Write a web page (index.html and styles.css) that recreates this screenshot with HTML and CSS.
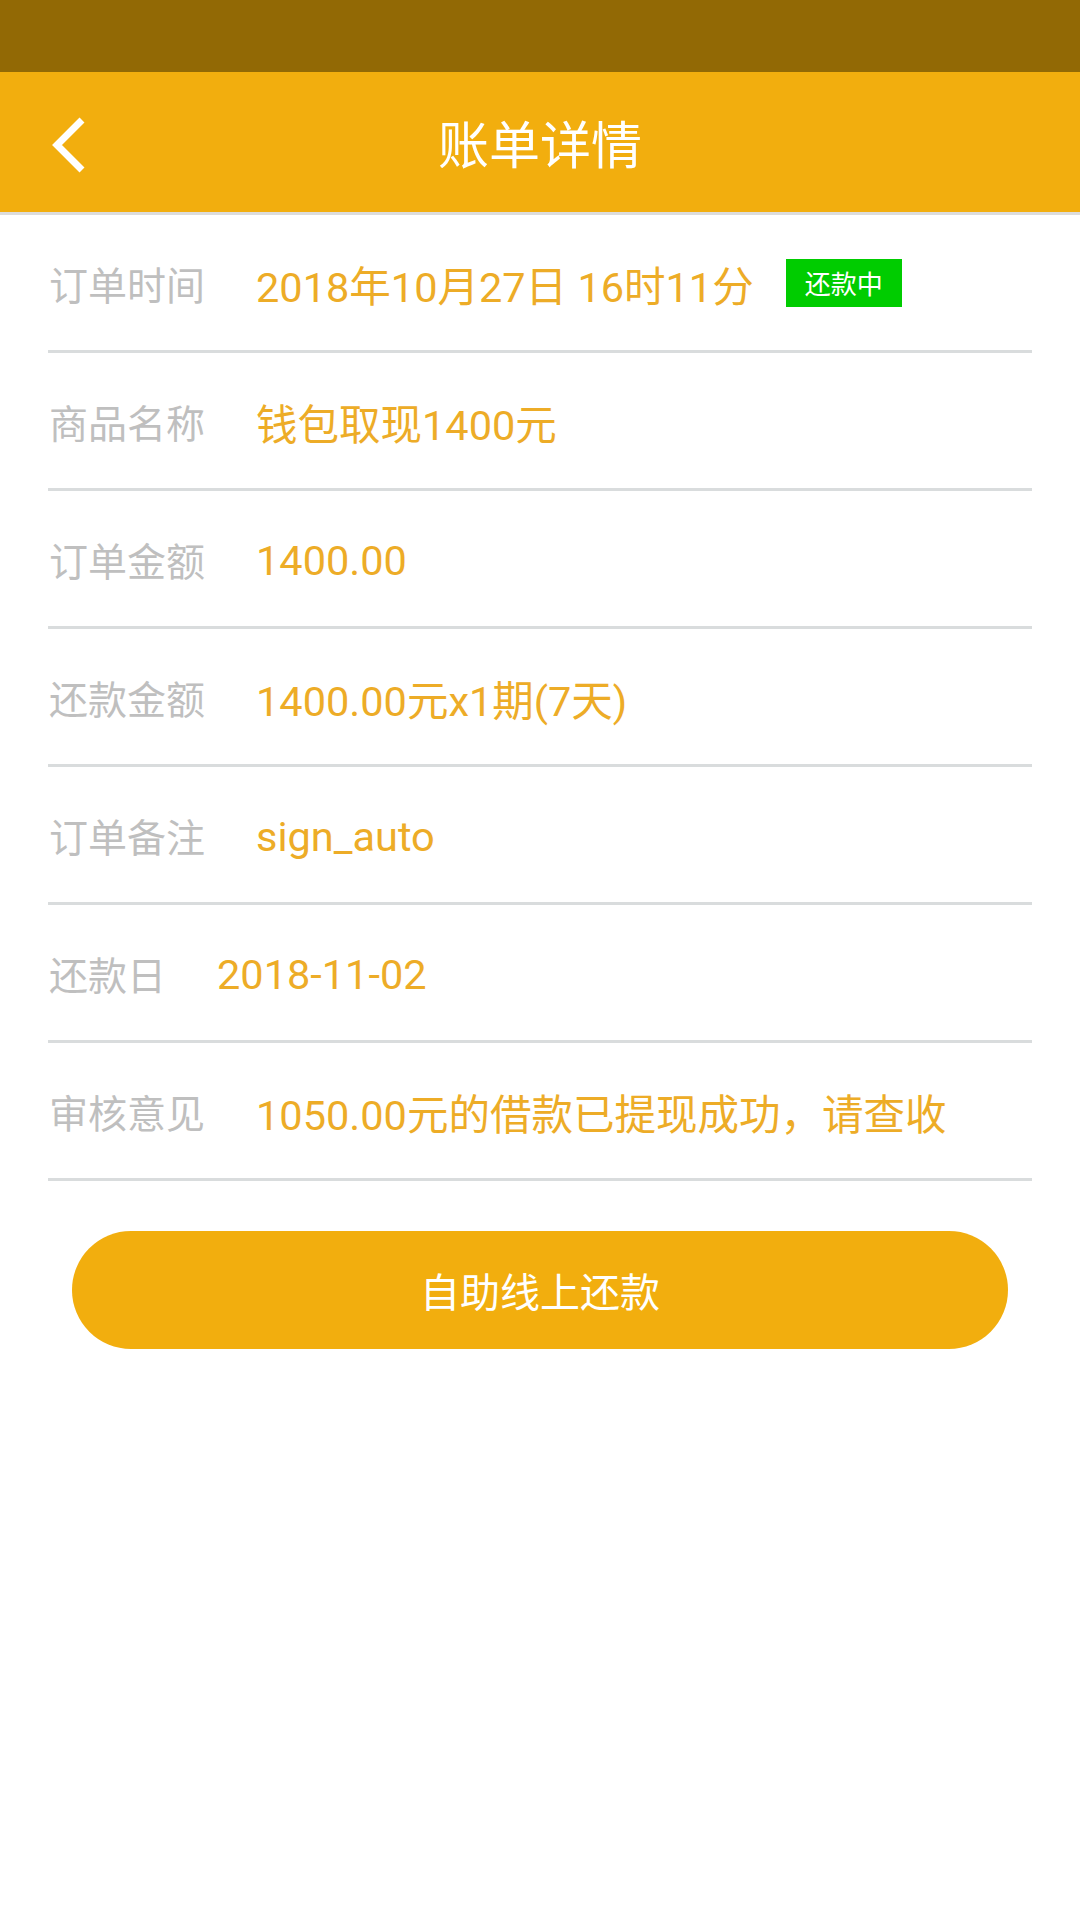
FILE: index.html
```html
<!DOCTYPE html>
<html lang="zh-CN">
<head>
    <meta charset="UTF-8">
    <meta name="viewport" content="width=device-width, initial-scale=1.0">
    <title>账单详情</title>
    <link rel="stylesheet" href="styles.css">
</head>
<body>

    <div class="status-bar"></div>

    <header class="title-bar">
        <a class="back" href="#">
            <svg width="40" height="60" viewBox="0 0 40 60">
                <polyline points="31,4 6,29 31,54" fill="none" stroke="#fff" stroke-width="7" stroke-linejoin="miter"/>
            </svg>
        </a>
        <h1>账单详情</h1>
    </header>

    <div class="detail-list">
        <div class="row">
            <span class="label">订单时间</span>
            <span class="value">2018年10月27日 16时11分</span>
            <span class="badge">还款中</span>
        </div>
        <div class="row">
            <span class="label">商品名称</span>
            <span class="value">钱包取现1400元</span>
        </div>
        <div class="row">
            <span class="label">订单金额</span>
            <span class="value">1400.00</span>
        </div>
        <div class="row">
            <span class="label">还款金额</span>
            <span class="value">1400.00元x1期(7天)</span>
        </div>
        <div class="row">
            <span class="label">订单备注</span>
            <span class="value">sign_auto</span>
        </div>
        <div class="row">
            <span class="label">还款日</span>
            <span class="value">2018-11-02</span>
        </div>
        <div class="row">
            <span class="label">审核意见</span>
            <span class="value">1050.00元的借款已提现成功，请查收</span>
        </div>
    </div>

    <button class="repay-btn" type="button">自助线上还款</button>

</body>
</html>
```

FILE: styles.css
```css
body {
    margin: 0;
    padding: 0;
    width: 1080px;
    height: 1920px;
    background-color: #fff;
    font-family: Roboto, "Noto Sans CJK SC", sans-serif;
}

.status-bar {
    height: 72px;
    background-color: #926905;
}

.title-bar {
    height: 140px;
    background-color: #f2ae0e;
    border-bottom: 3px solid #dcdcdc;
    display: flex;
    align-items: center;
    justify-content: center;
    position: relative;
}

.back {
    position: absolute;
    left: 51px;
    top: 44px;
    display: block;
    line-height: 0;
}

.title-bar h1 {
    margin: 0;
    color: #fff;
    font-size: 51px;
    font-weight: normal;
}

.detail-list {
    margin: 0 48px;
}

.row {
    height: 135px;
    border-bottom: 3px solid #d9dcdd;
    display: flex;
    align-items: center;
}

.label {
    color: #bfbfbf;
    font-size: 39px;
    margin-right: 51px;
    padding-left: 1px;
}

.value {
    color: #edac27;
    font-size: 41.5px;
    padding-top: 3px;
}

.badge {
    margin-left: 32px;
    background-color: #00cc00;
    color: #fff;
    font-size: 26px;
    height: 48px;
    padding: 0 19px;
    display: flex;
    align-items: center;
}

.repay-btn {
    display: block;
    margin: 50px 72px 0;
    width: 936px;
    height: 118px;
    border: none;
    border-radius: 59px;
    background-color: #f2ae0e;
    color: #fff;
    font-family: Roboto, "Noto Sans CJK SC", sans-serif;
    font-size: 40px;
    cursor: pointer;
}
```
